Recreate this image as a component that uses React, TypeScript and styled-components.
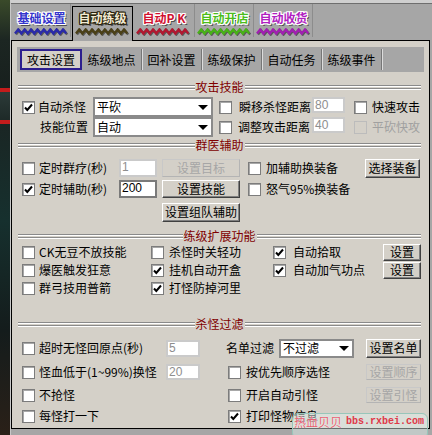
import styled, { createGlobalStyle } from 'styled-components';

const GlobalStyle = createGlobalStyle`
  html, body {
    margin: 0;
    padding: 0;
  }
  body {
    background: #a6a6a6;
    font-family: 'Noto Sans CJK SC', 'Liberation Sans', sans-serif;
    font-size: 12px;
    color: #000;
  }
`;

const Screen = styled.div`
  position: relative;
  width: 432px;
  height: 435px;
  display: flex;
  overflow: hidden;
`;

const GameEdge = styled.div`
  width: 10px;
  flex-shrink: 0;
  background: linear-gradient(
    to bottom,
    #3a4a2a 0,
    #1c2622 40px,
    #18201e 88px,
    #c41c1c 88px,
    #c41c1c 92px,
    #2c3a38 92px,
    #1e2a28 120px,
    #c41c1c 120px,
    #c41c1c 124px,
    #1a2624 124px,
    #16302e 220px,
    #141c1c 330px,
    #2a2018 100%
  );
`;

const Frame = styled.div`
  width: 422px;
  display: flex;
  flex-direction: column;
  background: #a6a6a6;
  border-left: 1px solid #c8c8c8;
  border-top: 3px solid #cfcfcf;
`;

const TabBar = styled.div`
  height: 37px;
  box-sizing: border-box;
  border-top: 1px solid #6e6e6e;
  display: flex;
  align-items: flex-end;
  gap: 1px;
  padding-left: 2px;
`;

const TopTab = styled.div<{ $w: number; $active?: boolean }>`
  position: relative;
  z-index: ${(p) => (p.$active ? 1 : 0)};
  box-sizing: border-box;
  width: ${(p) => p.$w}px;
  height: ${(p) => (p.$active ? 35 : 33)}px;
  margin-bottom: ${(p) => (p.$active ? -1 : 3)}px;
  padding-top: ${(p) => (p.$active ? 4 : 7)}px;
  border-top: ${(p) => (p.$active ? '1px solid #000' : 'none')};
  border-left: ${(p) => (p.$active ? '1px solid #000' : 'none')};
  border-right: 1px solid ${(p) => (p.$active ? '#000' : '#8c8c8c')};
  background: #a6a6a6;
  display: flex;
  flex-direction: column;
  align-items: center;
`;

const TabTitle = styled.span<{ $fill: string; $edge: string }>`
  height: 14px;
  font-size: 12px;
  font-weight: bold;
  line-height: 14px;
  white-space: nowrap;
  color: ${(p) => p.$fill};
  text-shadow: ${(p) =>
    [
      '1px 0', '-1px 0', '0 1px', '0 -1px',
      '1px 1px', '-1px -1px', '1px -1px', '-1px 1px',
    ]
      .map((o) => `${p.$edge} ${o} 0`)
      .join(', ') + ', #505050 2px 2px 0'};
`;

const WaveSvg = styled.svg`
  display: block;
  margin-top: 3px;
`;

const Panel = styled.div`
  box-sizing: border-box;
  width: 419px;
  height: 389px;
  border: 1px solid #000;
  background: #d4d0c8;
  display: flex;
  flex-direction: column;
`;

const SubTabBar = styled.div`
  margin: 6px 5px 0 5px;
  height: 25px;
  box-sizing: border-box;
  padding: 2px 0 0 3px;
  background: #a6a6a6;
  display: flex;
  align-items: flex-start;
`;

const SubTab = styled.div<{ $active?: boolean }>`
  box-sizing: border-box;
  width: ${(p) => (p.$active ? 62 : 60)}px;
  height: 21px;
  display: flex;
  align-items: center;
  justify-content: center;
  white-space: nowrap;
  ${(p) =>
    p.$active
      ? 'border: 2px solid #2c1e8e; background: #d4d0c8;'
      : 'border-right: 1px solid #767676; box-shadow: 1px 0 0 #dcdcdc;'}
`;

const SectionHead = styled.div<{ $mt: number }>`
  margin-top: ${(p) => p.$mt}px;
  height: 14px;
  padding: 0 8px 0 6px;
  display: flex;
  align-items: center;
`;

const Rule = styled.div`
  flex: 1;
  height: 2px;
  border-top: 1px solid #8a8a8a;
  border-bottom: 1px solid #8a8a8a;
  box-shadow: inset 0 1px 0 #fff, 0 1px 0 #fff;
`;

const HeadLabel = styled.span`
  color: #800000;
  padding: 0 1px;
  line-height: 14px;
  white-space: nowrap;
`;

const Row = styled.div<{ $h: number; $mt?: number; $pl?: number }>`
  display: flex;
  align-items: center;
  height: ${(p) => p.$h}px;
  margin-top: ${(p) => p.$mt ?? 0}px;
  padding-left: ${(p) => p.$pl ?? 10}px;
`;

const Cell = styled.div<{ $w?: number; $gap?: number; $pl?: number }>`
  box-sizing: border-box;
  ${(p) => (p.$w ? `width: ${p.$w}px;` : '')}
  flex-shrink: 0;
  display: flex;
  align-items: center;
  gap: ${(p) => p.$gap ?? 4}px;
  padding-left: ${(p) => p.$pl ?? 0}px;
`;

const Spacer = styled.div<{ $w: number }>`
  width: ${(p) => p.$w}px;
  flex-shrink: 0;
`;

const Box = styled.span<{ $off?: boolean }>`
  box-sizing: border-box;
  width: 13px;
  height: 13px;
  flex-shrink: 0;
  background: ${(p) => (p.$off ? '#d4d0c8' : '#fff')};
  border: 1px solid ${(p) => (p.$off ? '#bcbcbc' : '#7c7c7c')};
  box-shadow: ${(p) => (p.$off ? 'none' : 'inset 1px 1px 0 #a8a8a8')};
  display: flex;
  align-items: center;
  justify-content: center;
`;

const Text = styled.span<{ $off?: boolean }>`
  color: ${(p) => (p.$off ? '#a0a0a0' : '#000')};
  line-height: 14px;
  white-space: nowrap;
`;

const Field = styled.div<{ $w: number; $h: number; $off?: boolean; $top?: boolean }>`
  box-sizing: border-box;
  width: ${(p) => p.$w}px;
  height: ${(p) => p.$h}px;
  align-self: ${(p) => (p.$top ? 'flex-start' : 'center')};
  background: #fff;
  border: 2px solid ${(p) => (p.$off ? '#cacaca' : '#7a7a7a')};
  padding-left: 1px;
  font-family: 'Liberation Sans', Arial, sans-serif;
  font-size: 12px;
  line-height: 12px;
  color: ${(p) => (p.$off ? '#8e8e8e' : '#000')};
  overflow: hidden;
`;

const Select = styled.div<{ $w: number; $h: number }>`
  box-sizing: border-box;
  width: ${(p) => p.$w}px;
  height: ${(p) => p.$h}px;
  flex-shrink: 0;
  background: #fff;
  border: 2px solid #8a8a8a;
  display: flex;
  align-items: center;
  justify-content: space-between;
  padding: 0 3px 0 2px;
  line-height: 14px;
`;

const Arrow = styled.span`
  width: 0;
  height: 0;
  border-left: 5px solid transparent;
  border-right: 5px solid transparent;
  border-top: 5px solid #000;
`;

const Btn = styled.button<{ $w: number; $h: number }>`
  box-sizing: border-box;
  width: ${(p) => p.$w}px;
  height: ${(p) => p.$h}px;
  flex-shrink: 0;
  margin: 0;
  padding: 0;
  font: inherit;
  font-size: 12px;
  line-height: 14px;
  white-space: nowrap;
  background: #d4d0c8;
  color: #000;
  border: 1px solid;
  border-color: #fff #404040 #404040 #fff;
  box-shadow: inset -1px -1px 0 #808080;

  &:disabled {
    color: #a6a6a6;
    border-color: #c8c8c8 #b4b4b4 #b4b4b4 #c8c8c8;
    box-shadow: none;
  }
`;

const Watermark = styled.div`
  position: absolute;
  left: 292px;
  top: 413px;
  width: 136px;
  height: 26px;
  box-sizing: border-box;
  border: 1px solid #98c6ba;
  border-radius: 6px;
  background: rgba(226, 242, 238, 0.45);
  display: flex;
  align-items: flex-start;
  gap: 4px;
  padding: 1px 0 0 1px;
`;

const MarkName = styled.span`
  color: #e66070;
  font-size: 12px;
  line-height: 14px;
  text-shadow: 0 0 1px #fff;
  white-space: nowrap;
`;

const MarkUrl = styled.span`
  color: #e03848;
  font-family: 'Liberation Mono', monospace;
  font-weight: bold;
  font-size: 10px;
  line-height: 14px;
  white-space: nowrap;
`;

function Wave({ color }: { color: string }) {
  const pts: string[] = [];
  for (let i = 0; i <= 16; i++) pts.push(`${1 + i * 3.2},${i % 2 ? 1.5 : 5.5}`);
  const line = pts.join(' ');
  return (
    <WaveSvg width='56' height='8' viewBox='0 0 56 8'>
      <polyline points={line} transform='translate(1,1)' fill='none' stroke='#5a5a5a' strokeWidth='2.4' />
      <polyline points={line} fill='none' stroke={color} strokeWidth='2.4' />
    </WaveSvg>
  );
}

function Tick() {
  return (
    <svg width='9' height='9' viewBox='0 0 9 9'>
      <polyline points='1,4.5 3.3,7 8,1.5' fill='none' stroke='#000' strokeWidth='2' />
    </svg>
  );
}

function Check({ on, off }: { on?: boolean; off?: boolean }) {
  return <Box $off={off}>{on && <Tick />}</Box>;
}

const topTabs = [
  { label: '基础设置', w: 58, fill: '#3434cc', edge: '#fff', wave: '#2a2aa8' },
  { label: '自动练级', w: 61, fill: '#f2ead2', edge: '#2a2410', wave: '#4a4018', active: true },
  { label: '自动P K', w: 61, fill: '#d01030', edge: '#fff', wave: '#b01830' },
  { label: '自动开店', w: 58, fill: '#4cbc1c', edge: '#fff', wave: '#48b018' },
  { label: '自动收货', w: 58, fill: '#b020c0', edge: '#fff', wave: '#a020b0' },
];

const subTabs = ['攻击设置', '练级地点', '回补设置', '练级保护', '自动任务', '练级事件'];

function Section({ title, mt }: { title: string; mt: number }) {
  return (
    <SectionHead $mt={mt}>
      <Rule />
      <HeadLabel>{title}</HeadLabel>
      <Rule />
    </SectionHead>
  );
}

export default function App() {
  return (
    <Screen>
      <GlobalStyle />
      <GameEdge />
      <Frame>
        <TabBar>
          {topTabs.map((t) => (
            <TopTab key={t.label} $w={t.w} $active={t.active}>
              <TabTitle $fill={t.fill} $edge={t.edge}>{t.label}</TabTitle>
              <Wave color={t.wave} />
            </TopTab>
          ))}
        </TabBar>

        <Panel>
          <SubTabBar>
            {subTabs.map((s, i) => (
              <SubTab key={s} $active={i === 0}>{s}</SubTab>
            ))}
          </SubTabBar>

          <Section title='攻击技能' mt={8} />
          <Row $h={20} $mt={3}>
            <Cell $w={71} $gap={3}>
              <Check on />
              <Text>自动杀怪</Text>
            </Cell>
            <Select $w={120} $h={20}>平砍<Arrow /></Select>
            <Spacer $w={6} />
            <Cell $w={93} $gap={7}>
              <Check />
              <Text>瞬移杀怪距离</Text>
            </Cell>
            <Field $w={33} $h={16} $off $top>80</Field>
            <Spacer $w={9} />
            <Cell $gap={5}>
              <Check />
              <Text>快速攻击</Text>
            </Cell>
          </Row>
          <Row $h={20}>
            <Cell $w={71} $pl={18}>
              <Text>技能位置</Text>
            </Cell>
            <Select $w={120} $h={20}>自动<Arrow /></Select>
            <Spacer $w={6} />
            <Cell $w={93} $gap={6}>
              <Check />
              <Text>调整攻击距离</Text>
            </Cell>
            <Field $w={33} $h={16} $off $top>40</Field>
            <Spacer $w={9} />
            <Cell $gap={5}>
              <Check off />
              <Text $off>平砍快攻</Text>
            </Cell>
          </Row>

          <Section title='群医辅助' mt={1} />
          <Row $h={20} $mt={6}>
            <Cell $w={97}>
              <Check />
              <Text>定时群疗(秒)</Text>
            </Cell>
            <Field $w={38} $h={18} $off>1</Field>
            <Spacer $w={5} />
            <Btn $w={78} $h={18} disabled>设置目标</Btn>
            <Spacer $w={8} />
            <Cell $w={117} $gap={5}>
              <Check />
              <Text>加辅助换装备</Text>
            </Cell>
            <Btn $w={55} $h={19}>选择装备</Btn>
          </Row>
          <Row $h={20} $mt={1}>
            <Cell $w={97}>
              <Check on />
              <Text>定时辅助(秒)</Text>
            </Cell>
            <Field $w={38} $h={18}>200</Field>
            <Spacer $w={5} />
            <Btn $w={78} $h={18}>设置技能</Btn>
            <Spacer $w={8} />
            <Cell $w={117} $gap={5}>
              <Check />
              <Text>怒气95%换装备</Text>
            </Cell>
          </Row>
          <Row $h={20} $mt={3} $pl={150}>
            <Btn $w={78} $h={19}>设置组队辅助</Btn>
          </Row>

          <Section title='练级扩展功能' mt={7} />
          <Row $h={18}>
            <Cell $w={129}>
              <Check />
              <Text>CK无豆不放技能</Text>
            </Cell>
            <Cell $w={122} $gap={5}>
              <Check />
              <Text>杀怪时关轻功</Text>
            </Cell>
            <Cell $w={110} $gap={7}>
              <Check on />
              <Text>自动拾取</Text>
            </Cell>
            <Btn $w={38} $h={17}>设置</Btn>
          </Row>
          <Row $h={18}>
            <Cell $w={129}>
              <Check />
              <Text>爆医触发狂意</Text>
            </Cell>
            <Cell $w={122} $gap={5}>
              <Check on />
              <Text>挂机自动开盒</Text>
            </Cell>
            <Cell $w={110} $gap={7}>
              <Check on />
              <Text>自动加气功点</Text>
            </Cell>
            <Btn $w={38} $h={17}>设置</Btn>
          </Row>
          <Row $h={18}>
            <Cell $w={129}>
              <Check />
              <Text>群弓技用普箭</Text>
            </Cell>
            <Cell $w={122} $gap={5}>
              <Check on />
              <Text>打怪防掉河里</Text>
            </Cell>
          </Row>

          <Section title='杀怪过滤' mt={20} />
          <Row $h={20} $mt={7}>
            <Cell $w={144}>
              <Check />
              <Text>超时无怪回原点(秒)</Text>
            </Cell>
            <Field $w={34} $h={17} $off>5</Field>
            <Spacer $w={26} />
            <Cell $w={53}>
              <Text>名单过滤</Text>
            </Cell>
            <Select $w={75} $h={19}>不过滤<Arrow /></Select>
            <Spacer $w={12} />
            <Btn $w={55} $h={19}>设置名单</Btn>
          </Row>
          <Row $h={18} $mt={5}>
            <Cell $w={144}>
              <Check />
              <Text>怪血低于(1~99%)换怪</Text>
            </Cell>
            <Field $w={34} $h={16} $off>20</Field>
            <Spacer $w={28} />
            <Cell $w={138} $gap={5}>
              <Check />
              <Text>按优先顺序选怪</Text>
            </Cell>
            <Btn $w={55} $h={16} disabled>设置顺序</Btn>
          </Row>
          <Row $h={18} $mt={5}>
            <Cell $w={206}>
              <Check />
              <Text>不抢怪</Text>
            </Cell>
            <Cell $w={138} $gap={5}>
              <Check />
              <Text>开启自动引怪</Text>
            </Cell>
            <Btn $w={55} $h={16} disabled>设置引怪</Btn>
          </Row>
          <Row $h={18} $mt={3}>
            <Cell $w={206}>
              <Check />
              <Text>每怪打一下</Text>
            </Cell>
            <Cell $w={138} $gap={5}>
              <Check on />
              <Text>打印怪物信息</Text>
            </Cell>
          </Row>
        </Panel>
      </Frame>

      <Watermark>
        <MarkName>热血贝贝</MarkName>
        <MarkUrl>bbs.rxbei.com</MarkUrl>
      </Watermark>
    </Screen>
  );
}
